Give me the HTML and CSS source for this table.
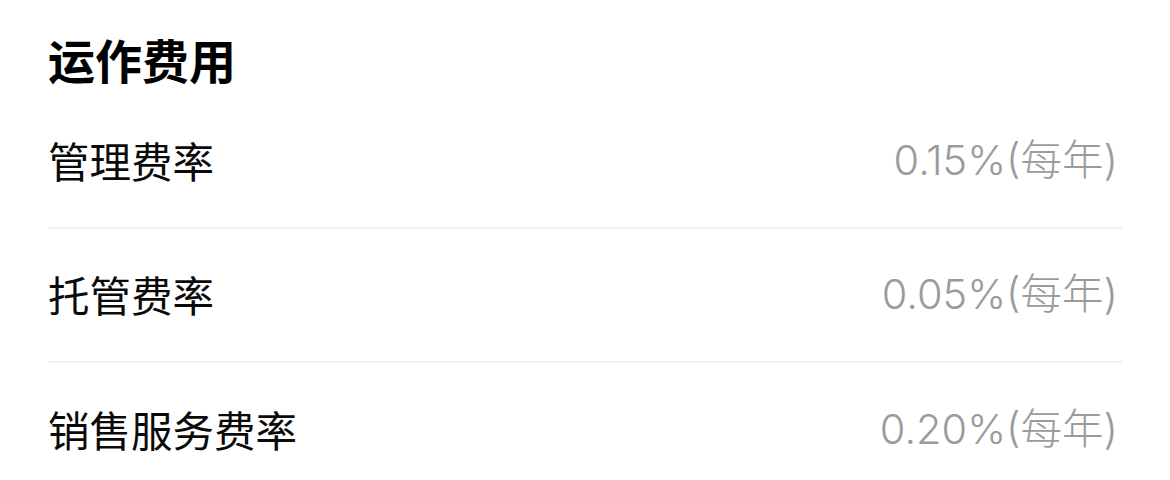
FILE: index.html
```html
<!DOCTYPE html>
<html lang="zh-CN">
<head>
<meta charset="utf-8">
<link rel="stylesheet" href="styles.css">
</head>
<body>
<div class="card">
  <div class="title">运作费用</div>
  <div class="row"><span class="label">管理费率</span><span class="value">0.15%(每年)</span></div>
  <div class="row"><span class="label">托管费率</span><span class="value">0.05%(每年)</span></div>
  <div class="row last"><span class="label">销售服务费率</span><span class="value">0.20%(每年)</span></div>
</div>
</body>
</html>
```
FILE: styles.css
```css
html, body {
  margin: 0;
  padding: 0;
  background: #ffffff;
}
.card {
  padding: 0 48px;
  font-family: "Noto Sans CJK SC", "Noto Sans", sans-serif;
}
.title {
  height: 95px;
  display: flex;
  align-items: center;
  padding-top: 22px;
  box-sizing: border-box;
  font-size: 47px;
  font-weight: 700;
  color: #000;
  line-height: 1;
}
.row {
  height: 134px;
  box-sizing: border-box;
  display: flex;
  justify-content: space-between;
  align-items: center;
  border-bottom: 2px solid #f0f0f0;
  line-height: 1;
}
.row.last {
  border-bottom: none;
}
.label {
  font-size: 41.5px;
  color: #0a0a0a;
}
.value {
  font-family: "Inter", "Noto Sans CJK SC", sans-serif;
  font-weight: 300;
  font-size: 41.5px;
  color: #9b9b9b;
  margin-right: 4px;
}
```
